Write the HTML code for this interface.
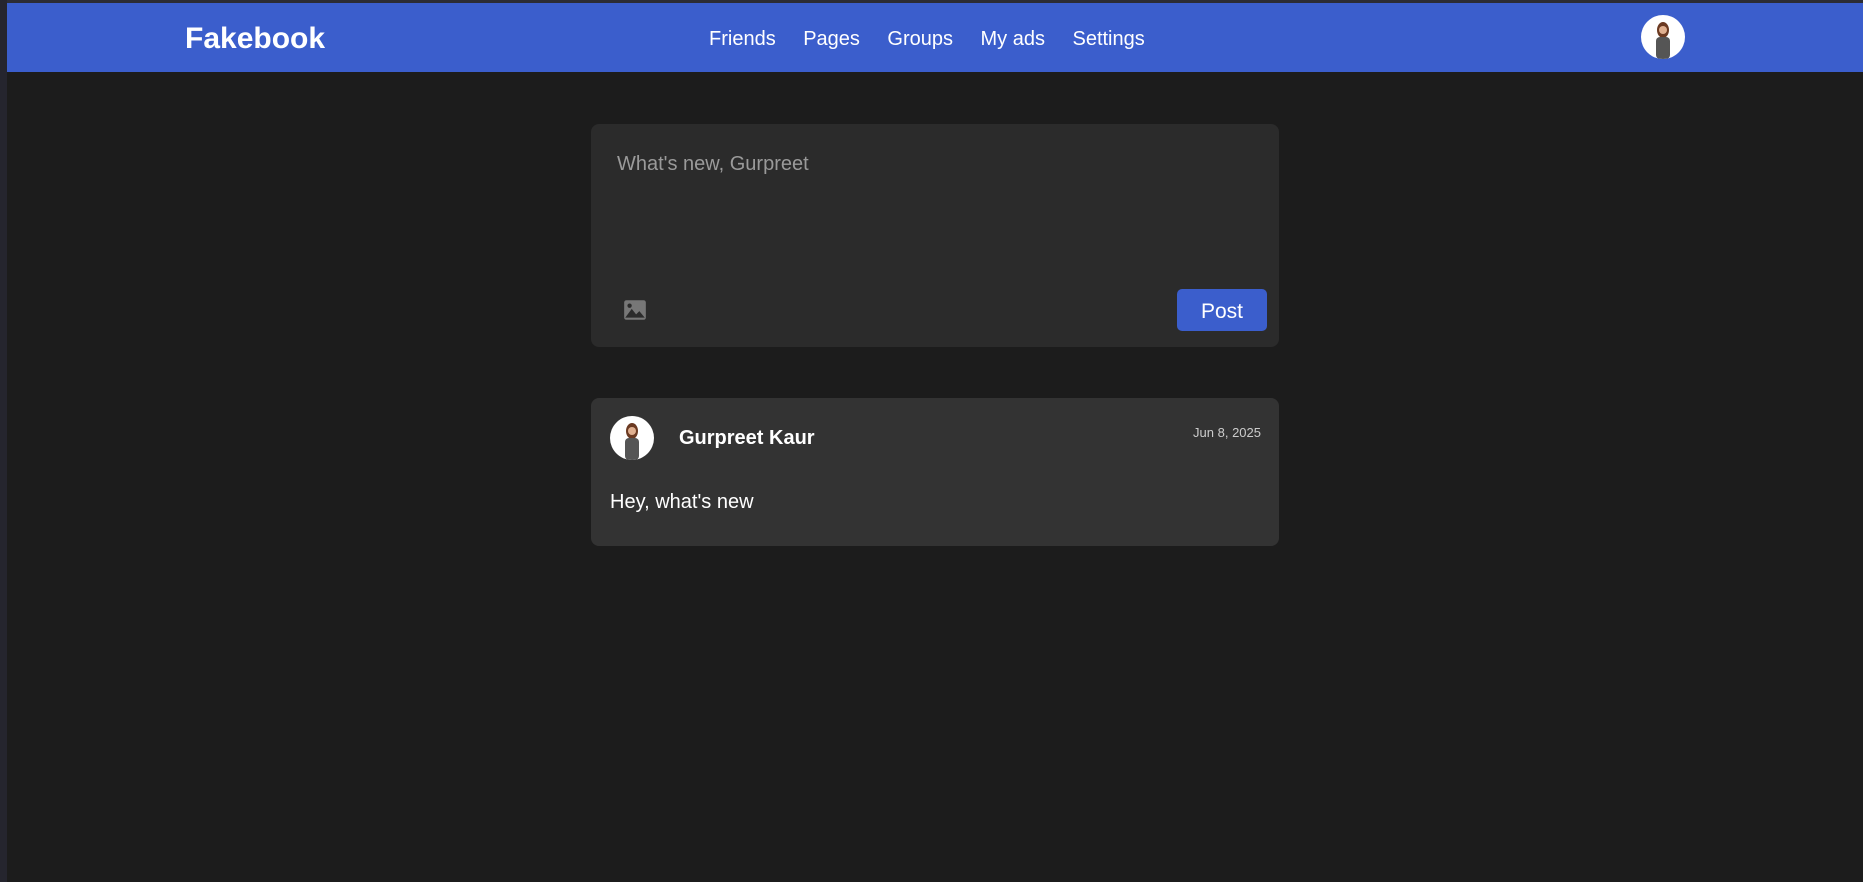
<!DOCTYPE html>
<html><head><meta charset="utf-8"><style>
*{box-sizing:border-box;margin:0;padding:0}
body{width:1863px;height:882px;background:#1c1c1c;font-family:"Liberation Sans",Arial,sans-serif;position:relative;overflow:hidden}
.top{position:absolute;left:0;top:0;width:1863px;height:3px;background:#2c2c34}
.left{position:absolute;left:0;top:0;width:7px;height:882px;background:#25252e}
.nav{position:absolute;left:7px;top:3px;right:0;height:69px;background:#3b5ecc;color:#fff}
.logo{position:absolute;left:178px;top:19px;font-size:30px;font-weight:bold}
.links{position:absolute;left:702px;top:25px;font-size:20px}
.links span{margin-right:27.5px}
.av{position:absolute;border-radius:50%;background:#fff;overflow:hidden}
.card{position:absolute;left:591px;width:688px;border-radius:8px}
.c1{top:124px;height:223px;background:#2b2b2b}
.c2{top:398px;height:148px;background:#333}
.ph{position:absolute;left:26px;top:29px;font-size:20px;color:#9a9a9a}
.btn{position:absolute;left:586px;top:165px;width:90px;height:42px;background:#3b5ecc;border-radius:5px;color:#fff;font-size:21px;text-align:center;line-height:45px}
.name{position:absolute;left:88px;top:29px;font-size:20px;font-weight:bold;color:#fff}
.date{position:absolute;right:18px;top:27px;font-size:13px;color:#ccc}
.body{position:absolute;left:19px;top:93px;font-size:20px;color:#fff}
</style></head><body>
<div class="top"></div><div class="left"></div>
<div class="nav">
<div class="logo">Fakebook</div>
<div class="links"><span>Friends</span><span>Pages</span><span>Groups</span><span>My ads</span><span>Settings</span></div>
<div class="av" style="left:1634px;top:12px;width:44px;height:44px"><svg width="44" height="44"><ellipse cx="22" cy="15" rx="6" ry="8" fill="#6b3a22"/><circle cx="22" cy="15" r="4" fill="#e0b090"/><rect x="15" y="22" width="14" height="22" rx="4" fill="#555"/></svg></div>
</div>
<div class="card c1">
<div class="ph">What's new, Gurpreet</div>
<svg style="position:absolute;left:31px;top:173px" width="26" height="26" viewBox="0 0 24 24"><rect x="2" y="3" width="20" height="18" rx="2" fill="#777"/><circle cx="7" cy="8" r="2" fill="#2b2b2b"/><path d="M3 19 L9 11 L13 16 L16 13 L21 19Z" fill="#2b2b2b"/></svg>
<div class="btn">Post</div>
</div>
<div class="card c2">
<div class="av" style="left:19px;top:18px;width:44px;height:44px"><svg width="44" height="44"><ellipse cx="22" cy="15" rx="6" ry="8" fill="#6b3a22"/><circle cx="22" cy="15" r="4" fill="#e0b090"/><rect x="15" y="22" width="14" height="22" rx="4" fill="#555"/></svg></div>
<div class="name">Gurpreet Kaur</div>
<div class="date">Jun 8, 2025</div>
<div class="body">Hey, what's new</div>
</div>
</body></html>
